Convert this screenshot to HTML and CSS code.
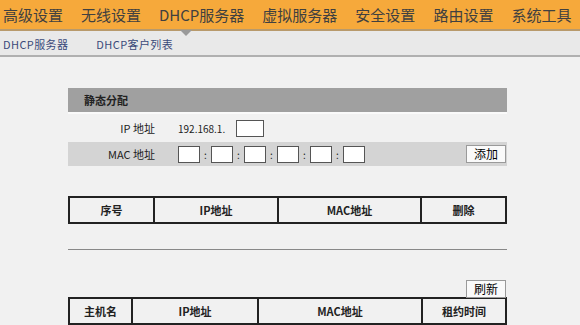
FILE: index.html
```html
<!DOCTYPE html>
<html lang="zh-CN">
<head>
    <meta charset="UTF-8" />
    <title>DHCP服务器</title>
    <link rel="stylesheet" href="styles.css">
</head>
<body>
    <div class="topnav">
        <a class="nav-item">高级设置</a>
        <a class="nav-item">无线设置</a>
        <a class="nav-item active">DHCP服务器</a>
        <a class="nav-item">虚拟服务器</a>
        <a class="nav-item">安全设置</a>
        <a class="nav-item">路由设置</a>
        <a class="nav-item">系统工具</a>
    </div>
    <div class="subnav">
        <a class="sub-item">DHCP服务器</a>
        <a class="sub-item">DHCP客户列表</a>
    </div>

    <div class="content">
        <div class="section-title">静态分配</div>
        <div class="form-row">
            <span class="label">IP 地址</span>
            <span class="ip-prefix">192.168.1.</span>
            <input type="text" class="box" />
        </div>
        <div class="form-row shaded">
            <span class="label">MAC 地址</span>
            <div class="mac">
                <input type="text" class="box" /><span class="colon">:</span>
                <input type="text" class="box" /><span class="colon">:</span>
                <input type="text" class="box" /><span class="colon">:</span>
                <input type="text" class="box" /><span class="colon">:</span>
                <input type="text" class="box" /><span class="colon">:</span>
                <input type="text" class="box" />
            </div>
            <button class="btn">添加</button>
        </div>

        <table class="grid static-list">
            <tr>
                <th class="c-no">序号</th>
                <th class="c-ip">IP地址</th>
                <th class="c-mac">MAC地址</th>
                <th>删除</th>
            </tr>
        </table>

        <hr class="divider" />

        <div class="toolbar">
            <button class="btn">刷新</button>
        </div>
        <table class="grid client-list">
            <tr>
                <th class="c-host">主机名</th>
                <th class="c-ip2">IP地址</th>
                <th class="c-mac2">MAC地址</th>
                <th>租约时间</th>
            </tr>
        </table>
    </div>
</body>
</html>
```

FILE: styles.css
```css
body {
    margin: 0;
    background: #f1f1f1;
    font-family: "Noto Sans CJK SC", "DejaVu Sans", sans-serif;
    color: #222;
}
.topnav {
    background: #f6a93b;
    height: 29px;
    display: flex;
    border-bottom: 2px solid #b89a6c;
}
.nav-item {
    font-size: 15px;
    line-height: 29px;
    color: #404040;
    padding: 0 15px 0 3px;
    white-space: nowrap;
}
.nav-item.active {
    position: relative;
}
.nav-item.active::after {
    content: "";
    position: absolute;
    left: 24px;
    top: 30px;
    border-left: 6px solid transparent;
    border-right: 6px solid transparent;
    border-top: 6px solid #9a9a9a;
}
.subnav {
    background: #e9e9e9;
    height: 24px;
    display: flex;
    border-bottom: 2px solid #b0b0b0;
}
.sub-item {
    font-size: 11px;
    line-height: 26px;
    color: #3b4a7a;
    padding-left: 3px;
    margin-right: 25px;
    letter-spacing: 0.4px;
}
.content {
    width: 439px;
    margin: 31px 0 0 68px;
}
.section-title {
    background: #a0a0a0;
    height: 24px;
    line-height: 24px;
    padding-left: 16px;
    font-size: 11px;
    font-weight: bold;
    border-bottom: 2px solid #fafafa;
}
.form-row {
    display: flex;
    align-items: center;
    height: 22px;
    margin-top: 3px;
    font-size: 11px;
}
.form-row.shaded {
    background: #d4d4d4;
    height: 24px;
    margin-top: 3px;
}
.label {
    width: 87px;
    text-align: right;
    margin-right: 23px;
}
.ip-prefix {
    width: 58px;
    font-size: 10px;
}
.box {
    width: 20px;
    height: 15px;
    border: 1px solid #555;
    background: #fff;
    padding: 0;
    margin: 0;
}
.form-row .ip-prefix + .box {
    width: 26px;
}
.mac {
    display: flex;
    align-items: center;
}
.colon {
    width: 11px;
    text-align: center;
    font-size: 10px;
}
.btn {
    margin-left: auto;
    margin-right: 1px;
    width: 40px;
    height: 18px;
    padding: 0;
    background: #fafafa;
    border: 1px solid #9a9a9a;
    font-family: inherit;
    font-size: 12px;
    line-height: 16px;
}
.grid {
    width: 439px;
    border-collapse: collapse;
    table-layout: fixed;
    background: #f1f1f1;
}
.grid th {
    border: 2px solid #222;
    height: 24px;
    font-size: 11px;
    font-weight: bold;
    padding: 0;
}
.static-list {
    margin-top: 30px;
}
.c-no { width: 83px; }
.c-ip { width: 122px; }
.c-mac { width: 141px; }
.c-host { width: 61px; }
.c-ip2 { width: 124px; }
.c-mac2 { width: 162px; }
.divider {
    margin: 25px 0 0;
    border: 0;
    border-top: 1px solid #888;
}
.toolbar {
    display: flex;
    margin-top: 30px;
    height: 17px;
}
```
